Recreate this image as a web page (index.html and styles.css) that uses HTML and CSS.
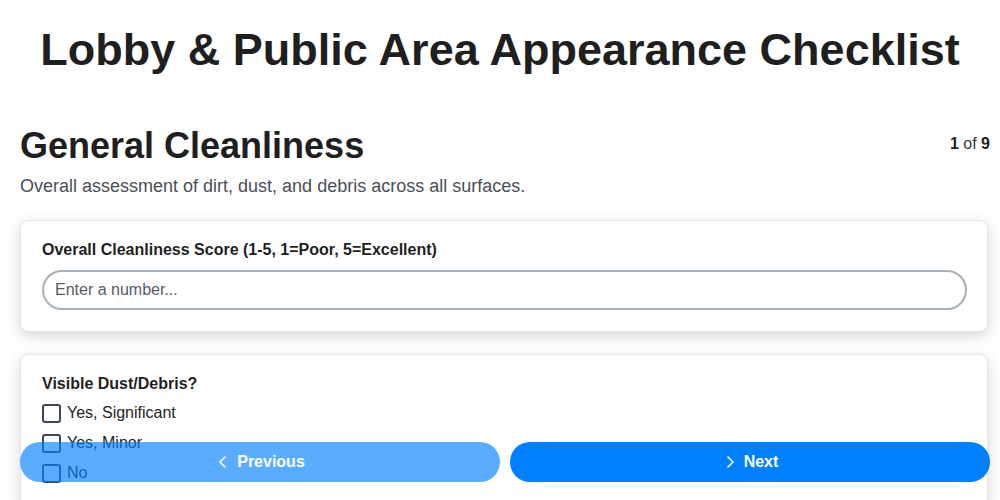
FILE: index.html
```html
<!DOCTYPE html>
<html lang="en">
<head>
    <meta charset="UTF-8">
    <title>Lobby & Public Area Appearance Checklist</title>
    <link rel="stylesheet" href="styles.css">
</head>
<body>
    <h1 class="page-title">Lobby &amp; Public Area Appearance Checklist</h1>

    <div class="section-head">
        <h2>General Cleanliness</h2>
        <div class="step-count"><b>1</b> of <b>9</b></div>
    </div>
    <p class="section-desc">Overall assessment of dirt, dust, and debris across all surfaces.</p>

    <div class="card">
        <label class="field-label" for="score">Overall Cleanliness Score (1-5, 1=Poor, 5=Excellent)</label>
        <input type="number" id="score" class="text-input" placeholder="Enter a number...">
    </div>

    <div class="card">
        <div class="field-label group-label">Visible Dust/Debris?</div>
        <label class="check-row"><input type="checkbox"> Yes, Significant</label>
        <label class="check-row"><input type="checkbox"> Yes, Minor</label>
        <label class="check-row"><input type="checkbox"> No</label>
    </div>

    <div class="nav-bar">
        <button class="nav-btn prev" type="button">
            <svg width="16" height="16" viewBox="0 0 16 16"><path d="M10 3 L5 8 L10 13" fill="none" stroke="#fff" stroke-width="1.6" stroke-linecap="round" stroke-linejoin="round"/></svg>
            Previous
        </button>
        <button class="nav-btn next" type="button">
            <svg width="16" height="16" viewBox="0 0 16 16"><path d="M6 3 L11 8 L6 13" fill="none" stroke="#fff" stroke-width="1.6" stroke-linecap="round" stroke-linejoin="round"/></svg>
            Next
        </button>
    </div>
</body>
</html>
```

FILE: styles.css
```css
* {
    box-sizing: border-box;
}
body {
    margin: 0;
    padding: 0 12px 0 20px;
    background: #fff;
    color: #1f1f1f;
    font-family: "Liberation Sans", Arial, sans-serif;
    font-size: 16px;
}
.page-title {
    margin: 23px 0 47px -8px;
    text-align: center;
    font-size: 45px;
    line-height: 54px;
}
.section-head {
    display: flex;
    justify-content: space-between;
    align-items: flex-start;
}
.section-head h2 {
    margin: 0;
    font-size: 36px;
    line-height: 44px;
}
.step-count {
    margin-top: 11px;
    margin-right: -2px;
    font-size: 16px;
    color: #333;
}
.step-count b {
    color: #1f1f1f;
}
.section-desc {
    margin: 8px 0 23px;
    color: #4a4f57;
    font-size: 18px;
}
.card {
    background: #fff;
    border: 1px solid #e6e6ea;
    border-radius: 8px;
    padding: 20px 20px 21px 21px;
    margin-bottom: 22px;
    box-shadow: 0 4px 14px rgba(0, 0, 0, 0.17);
}
.field-label {
    display: block;
    font-weight: bold;
    font-size: 16px;
    line-height: 18px;
    margin-bottom: 11px;
}
.group-label {
    margin-bottom: 5px;
}
.text-input {
    display: block;
    width: 100%;
    height: 40px;
    padding: 0 11px;
    border: 2px solid #a7b0ba;
    border-radius: 20px;
    font-family: inherit;
    font-size: 16px;
    color: #333;
}
.text-input::placeholder {
    color: #555b66;
}
.check-row {
    display: flex;
    align-items: center;
    gap: 6px;
    height: 30px;
    font-size: 16px;
}
.check-row input {
    appearance: none;
    margin: 0;
    width: 19px;
    height: 19px;
    border: 2px solid #3f4656;
    border-radius: 3px;
}
.nav-bar {
    position: fixed;
    left: 20px;
    right: 10px;
    bottom: 18px;
    display: flex;
    gap: 10px;
}
.nav-btn {
    flex: 1;
    display: flex;
    align-items: center;
    justify-content: center;
    gap: 6px;
    height: 40px;
    border: none;
    border-radius: 20px;
    background: #0080ff;
    color: #fff;
    font-family: inherit;
    font-size: 16px;
    font-weight: bold;
}
.nav-btn.prev {
    opacity: 0.65;
}
```
